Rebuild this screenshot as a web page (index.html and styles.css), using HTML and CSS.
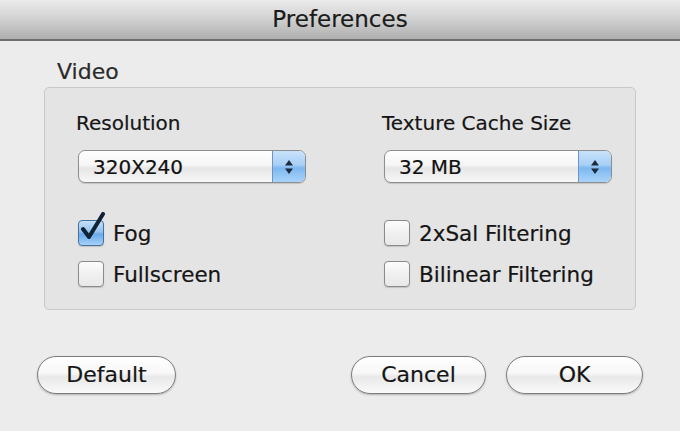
FILE: index.html
```html
<!DOCTYPE html>
<html>
<head>
<meta charset="utf-8">
<link rel="stylesheet" href="styles.css">
</head>
<body>
<div class="window">
  <div class="titlebar">Preferences</div>
  <div class="content">
    <div class="group-label">Video</div>
    <div class="groupbox">
      <div class="col">
        <div class="label">Resolution</div>
        <div class="popup">
          <span class="popup-text">320X240</span>
          <span class="popup-arrows">
            <svg width="12" height="18" viewBox="0 0 12 18"><path d="M6 2 L10 7.5 L2 7.5 Z M6 16 L10 10.5 L2 10.5 Z" fill="#1d2a3a"/></svg>
          </span>
        </div>
        <div class="checks">
          <div class="check"><span class="box checked"><svg class="tick" width="30" height="32" viewBox="0 0 30 32"><path d="M5 17 L11 25 L25 2" fill="none" stroke="#0f2236" stroke-width="4" stroke-linejoin="round" stroke-linecap="round"/></svg></span><span>Fog</span></div>
          <div class="check"><span class="box"></span><span>Fullscreen</span></div>
        </div>
      </div>
      <div class="col">
        <div class="label">Texture Cache Size</div>
        <div class="popup">
          <span class="popup-text">32 MB</span>
          <span class="popup-arrows">
            <svg width="12" height="18" viewBox="0 0 12 18"><path d="M6 2 L10 7.5 L2 7.5 Z M6 16 L10 10.5 L2 10.5 Z" fill="#1d2a3a"/></svg>
          </span>
        </div>
        <div class="checks">
          <div class="check"><span class="box"></span><span>2xSal Filtering</span></div>
          <div class="check"><span class="box"></span><span>Bilinear Filtering</span></div>
        </div>
      </div>
    </div>
    <div class="buttons">
      <div class="btn btn-default">Default</div>
      <div class="right-buttons">
        <div class="btn btn-cancel">Cancel</div>
        <div class="btn btn-ok">OK</div>
      </div>
    </div>
  </div>
</div>
</body>
</html>
```

FILE: styles.css
```css
* { box-sizing: border-box; }
html, body { margin: 0; padding: 0; }
body {
  width: 680px;
  height: 431px;
  overflow: hidden;
  background: #ececec;
  font-family: "DejaVu Sans", "Liberation Sans", sans-serif;
  color: #151515;
  -webkit-text-stroke: 0.2px currentColor;
}
.window {
  width: 680px;
  height: 431px;
  background: #ececec;
}
.titlebar {
  height: 41px;
  background: linear-gradient(#ebebeb 0%, #d6d6d6 40%, #afafaf 100%);
  border-bottom: 2px solid #6e6e6e;
  text-align: center;
  font-size: 23px;
  line-height: 39px;
  color: #1b1b1b;
}
.content {
  padding: 17px 37px 0 37px;
}
.group-label {
  font-size: 22px;
  line-height: 28px;
  margin-left: 20px;
  height: 29px;
  color: #2a2a2a;
}
.groupbox {
  margin-left: 7px;
  width: 592px;
  height: 223px;
  background: #e4e4e4;
  border: 1px solid #c9c9c9;
  border-radius: 5px;
  display: grid;
  grid-template-columns: 306px 228px;
  padding: 22px 0 0 33px;
}
.label {
  font-size: 20px;
  line-height: 26px;
  height: 40px;
  margin-left: -2px;
}
.popup {
  width: 228px;
  height: 33px;
  border: 1px solid #8e8e8e;
  border-radius: 7px;
  background: linear-gradient(#ffffff 0%, #f6f6f6 45%, #e6e6e6 55%, #f7f7f7 100%);
  box-shadow: 0 1px 1px rgba(0,0,0,0.15);
  display: flex;
  align-items: center;
  overflow: hidden;
}
.popup-text {
  flex: 1;
  font-size: 20px;
  padding-left: 14px;
  color: #111;
}
.popup-arrows {
  width: 33px;
  height: 100%;
  background: linear-gradient(#c9e2fa 0%, #a7cff5 45%, #7db8f0 55%, #a9d3fa 100%);
  border-left: 1px solid #6f93c2;
  display: flex;
  align-items: center;
  justify-content: center;
  -webkit-text-stroke: 0;
}
.checks {
  margin-top: 37px;
  display: flex;
  flex-direction: column;
  gap: 15px;
}
.check {
  display: flex;
  align-items: center;
  gap: 9px;
  font-size: 21.5px;
  height: 26px;
}
.box {
  position: relative;
  width: 26px;
  height: 26px;
  border: 1px solid #8a8a8a;
  border-radius: 4px;
  background: linear-gradient(#fdfdfd 0%, #f0f0f0 50%, #e8e8e8 100%);
  box-shadow: 0 1px 1px rgba(0,0,0,0.15);
  flex: none;
}
.box.checked {
  border-color: #46729f;
  background: linear-gradient(#c4dff9 0%, #94c2ef 45%, #6aa9ea 55%, #a7d1f8 100%);
}
.tick {
  position: absolute;
  left: -1px;
  top: -9px;
}
.buttons {
  margin-top: 46px;
  display: flex;
  justify-content: space-between;
}
.right-buttons {
  display: flex;
  gap: 20px;
}
.btn {
  height: 38px;
  border: 1px solid #7c7c7c;
  border-radius: 19px;
  background: linear-gradient(#ffffff 0%, #f7f7f7 45%, #e8e8e8 55%, #fafafa 100%);
  box-shadow: 0 1px 2px rgba(0,0,0,0.25);
  font-size: 22px;
  line-height: 36px;
  text-align: center;
  color: #151515;
}
.btn-default { width: 139px; }
.btn-cancel { width: 135px; }
.btn-ok { width: 137px; }
```
